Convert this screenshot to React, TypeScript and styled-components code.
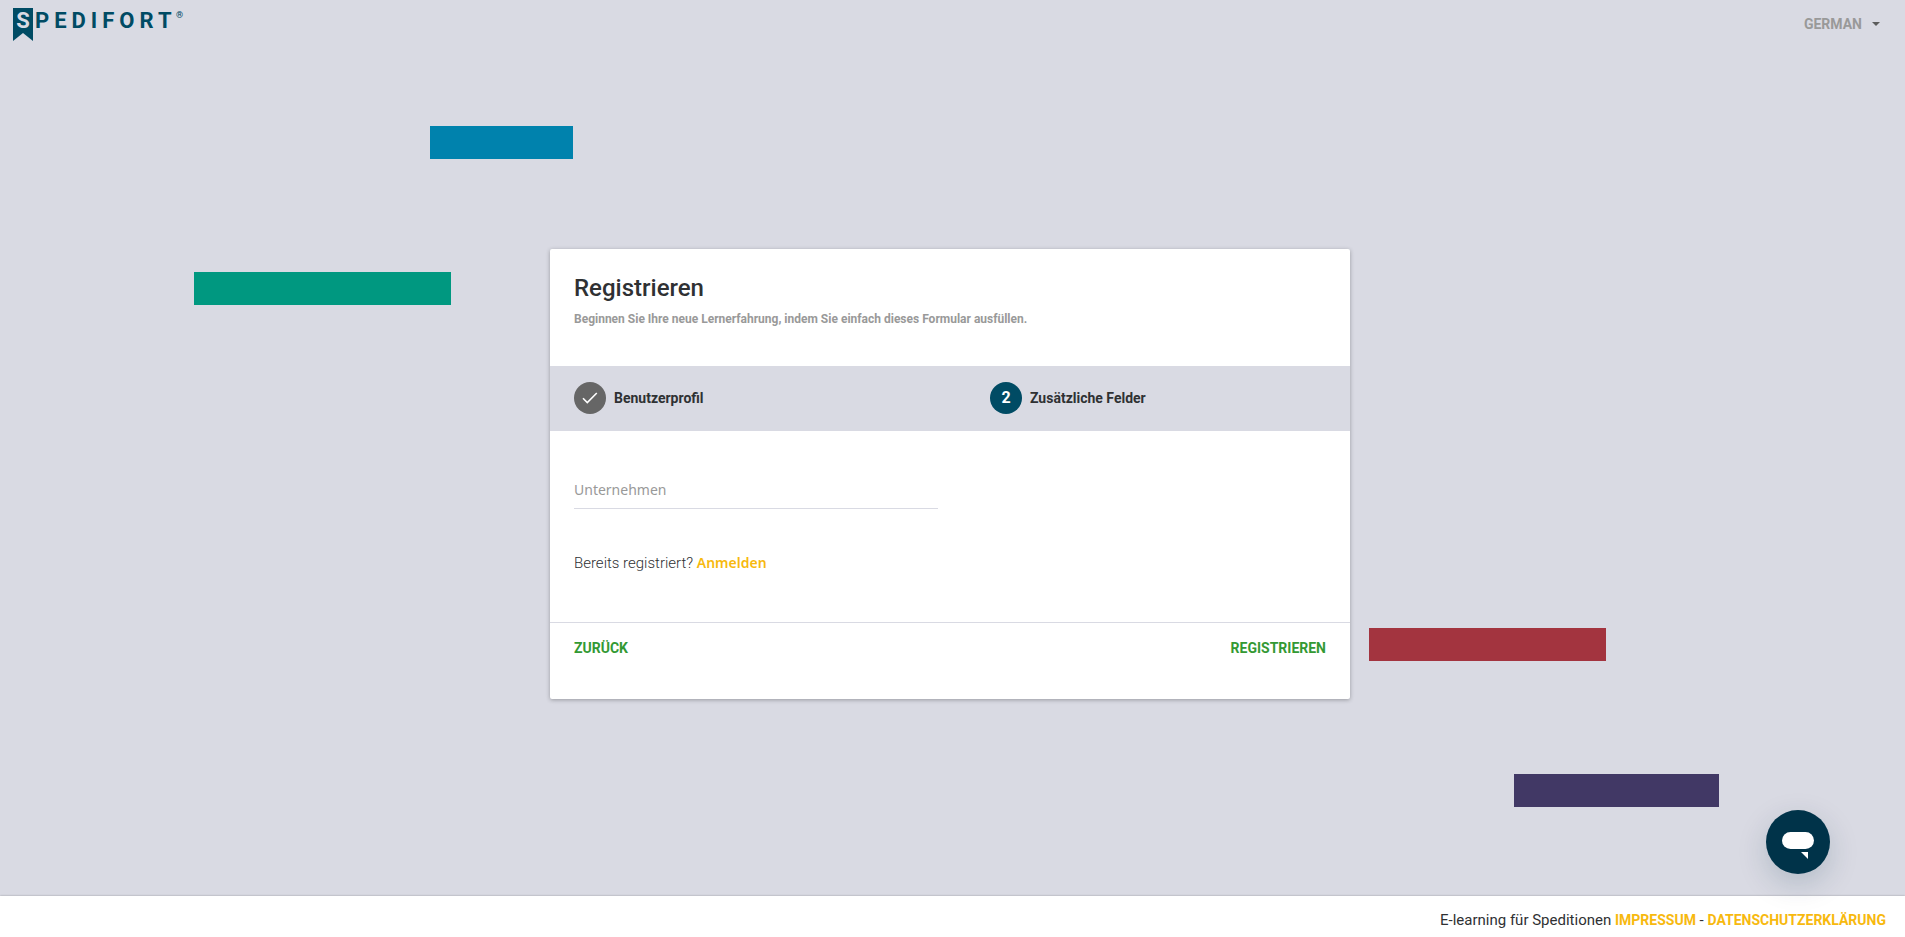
import React from "react";
import styled, { createGlobalStyle } from "styled-components";

const colors = {
  page: "#d9dae3",
  text: "#2f3133",
  muted: "#999999",
  brand: "#004b64",
  green: "#339933",
  yellow: "#f7b90f",
};

const GlobalStyle = createGlobalStyle`
  *, *::before, *::after { box-sizing: border-box; }
  body {
    margin: 0;
    background: ${colors.page};
    color: ${colors.text};
    font-family: Roboto, "Liberation Sans", sans-serif;
    font-size: 14px;
    line-height: 20px;
  }
  button, input { font: inherit; color: inherit; }
`;

const Page = styled.div`
  position: relative;
  display: flex;
  flex-direction: column;
  min-height: 100vh;
`;

const Backdrop = styled.svg`
  position: absolute;
  inset: 0;
  width: 100%;
  height: 100%;
  pointer-events: none;
`;

const Header = styled.header`
  position: relative;
  display: flex;
  justify-content: space-between;
  align-items: flex-start;
  height: 52px;
  padding: 8px 25px 0 13px;
`;

const LogoLink = styled.a`
  display: flex;
  line-height: 0;
`;

const LanguageButton = styled.button`
  display: flex;
  align-items: center;
  gap: 10px;
  padding: 6px 0;
  border: 0;
  background: none;
  color: ${colors.muted};
  font-weight: 700;
  cursor: pointer;
`;

const Main = styled.main`
  position: relative;
  display: flex;
  flex: 1;
  align-items: center;
  justify-content: center;
  padding: 0 5px 0 0;
`;

const Card = styled.form`
  width: 100%;
  max-width: 800px;
  border-radius: 2px;
  background: #fff;
  box-shadow: 0 1px 4px rgba(0, 0, 0, 0.3);
`;

const CardHeader = styled.div`
  padding: 22px 24px 36px;
`;

const Title = styled.h1`
  margin: 0;
  font-size: 24px;
  font-weight: 500;
  line-height: 34px;
`;

const Subtitle = styled.p`
  margin: 3px 0 0;
  color: ${colors.muted};
  font-size: 12px;
  font-weight: 700;
  line-height: 22px;
`;

const Steps = styled.ol`
  display: grid;
  grid-template-columns: 364px 1fr;
  gap: 52px;
  margin: 0;
  padding: 16px 24px 17px;
  background: ${colors.page};
  list-style: none;
`;

const Step = styled.li`
  display: flex;
  align-items: center;
  gap: 8px;
  font-weight: 700;
`;

const StepBadge = styled.span<{ $done?: boolean }>`
  display: grid;
  place-items: center;
  width: 32px;
  height: 32px;
  border-radius: 50%;
  background: ${(p) => (p.$done ? "#666666" : colors.brand)};
  color: #fff;
  font-size: 16px;
  font-weight: 700;
`;

const CardBody = styled.div`
  padding: 40px 24px 49px;
`;

const CompanyInput = styled.input`
  display: block;
  width: 364px;
  max-width: 100%;
  height: 38px;
  padding: 0 0 1px;
  border: 0;
  border-bottom: 1px solid ${colors.page};
  border-radius: 0;
  background: none;
  font-family: "Noto Sans", sans-serif;
  outline: 0;

  &::placeholder { color: ${colors.muted}; opacity: 1; }
`;

const SignIn = styled.p`
  margin: 44px 0 0;
  font-size: 15px;
  font-weight: 300;
`;

const TextLink = styled.a`
  color: ${colors.yellow};
  font-size: 14px;
  font-weight: 700;
  text-decoration: none;
`;

const SignInLink = styled(TextLink)`
  font-family: "Noto Sans", sans-serif;
  font-weight: 600;
`;

const CardActions = styled.div`
  display: flex;
  justify-content: space-between;
  padding: 15px 24px 41px;
  border-top: 1px solid ${colors.page};
`;

const ActionButton = styled.button`
  padding: 0;
  border: 0;
  background: none;
  color: ${colors.green};
  font-weight: 700;
  cursor: pointer;
`;

const Footer = styled.footer`
  position: relative;
  padding: 14px 19px 7px;
  background: #fff;
  box-shadow: 0 0 2px rgba(0, 0, 0, 0.3);
  font-size: 15px;
  font-weight: 400;
  text-align: right;
`;

const ChatButton = styled.button`
  position: fixed;
  right: 75px;
  bottom: 63px;
  width: 64px;
  height: 64px;
  padding: 0;
  border: 0;
  border-radius: 50%;
  background: #003349;
  box-shadow: 0 10px 30px rgba(0, 51, 73, 0.18);
  cursor: pointer;
`;

const Logo = () => (
  <svg width="174" height="34" viewBox="0 0 174 34" role="img" aria-label="Spedifort">
    <path d="M0 0H20V33L10 25L0 33Z" fill={colors.brand} />
    <g fontFamily="Roboto, sans-serif" fontWeight="700">
      <text x="10" y="20" fontSize="22" textAnchor="middle" fill={colors.page}>S</text>
      <text x="22" y="20" fontSize="22" letterSpacing="5" fill={colors.brand}>PEDIFORT</text>
      <text x="163" y="10" fontSize="9" fill={colors.brand}>®</text>
    </g>
  </svg>
);

export default function App() {
  return (
    <Page>
      <GlobalStyle />
      <Backdrop viewBox="0 0 1905 937" preserveAspectRatio="xMidYMid slice" aria-hidden="true">
        <rect x="430" y="126" width="143" height="33" fill="#0082ad" />
        <rect x="194" y="272" width="257" height="33" fill="#009880" />
        <rect x="1369" y="628" width="237" height="33" fill="#a3343f" />
        <rect x="1514" y="774" width="205" height="33" fill="#413865" />
      </Backdrop>
      <Header>
        <LogoLink href="#"><Logo /></LogoLink>
        <LanguageButton type="button" aria-haspopup="listbox">
          GERMAN
          <svg width="8" height="4" viewBox="0 0 8 4" aria-hidden="true">
            <path d="M0 0H8L4 4Z" fill="#5c5c5c" />
          </svg>
        </LanguageButton>
      </Header>
      <Main>
        <Card onSubmit={(e: React.FormEvent) => e.preventDefault()}>
          <CardHeader>
            <Title>Registrieren</Title>
            <Subtitle>Beginnen Sie Ihre neue Lernerfahrung, indem Sie einfach dieses Formular ausfüllen.</Subtitle>
          </CardHeader>
          <Steps>
            <Step>
              <StepBadge $done>
                <svg width="16" height="12" viewBox="0 0 16 12" fill="none" stroke="#fff" strokeWidth="1.6" aria-hidden="true">
                  <path d="M1 6.2L5.3 10.5L14.8 1" />
                </svg>
              </StepBadge>
              Benutzerprofil
            </Step>
            <Step aria-current="step">
              <StepBadge>2</StepBadge>
              Zusätzliche Felder
            </Step>
          </Steps>
          <CardBody>
            <CompanyInput type="text" name="company" placeholder="Unternehmen" aria-label="Unternehmen" />
            <SignIn>
              Bereits registriert? <SignInLink href="#">Anmelden</SignInLink>
            </SignIn>
          </CardBody>
          <CardActions>
            <ActionButton type="button">ZURÜCK</ActionButton>
            <ActionButton type="submit">REGISTRIEREN</ActionButton>
          </CardActions>
        </Card>
      </Main>
      <Footer>
        E-learning für Speditionen <TextLink href="#">IMPRESSUM</TextLink> -{" "}
        <TextLink href="#">DATENSCHUTZERKLÄRUNG</TextLink>
      </Footer>
      <ChatButton type="button" aria-label="Chat">
        <svg width="64" height="64" viewBox="0 0 64 64" fill="#fff" aria-hidden="true">
          <rect x="16" y="22" width="32" height="17" rx="8.5" />
          <path d="M35 42H42V49Z" />
        </svg>
      </ChatButton>
    </Page>
  );
}
